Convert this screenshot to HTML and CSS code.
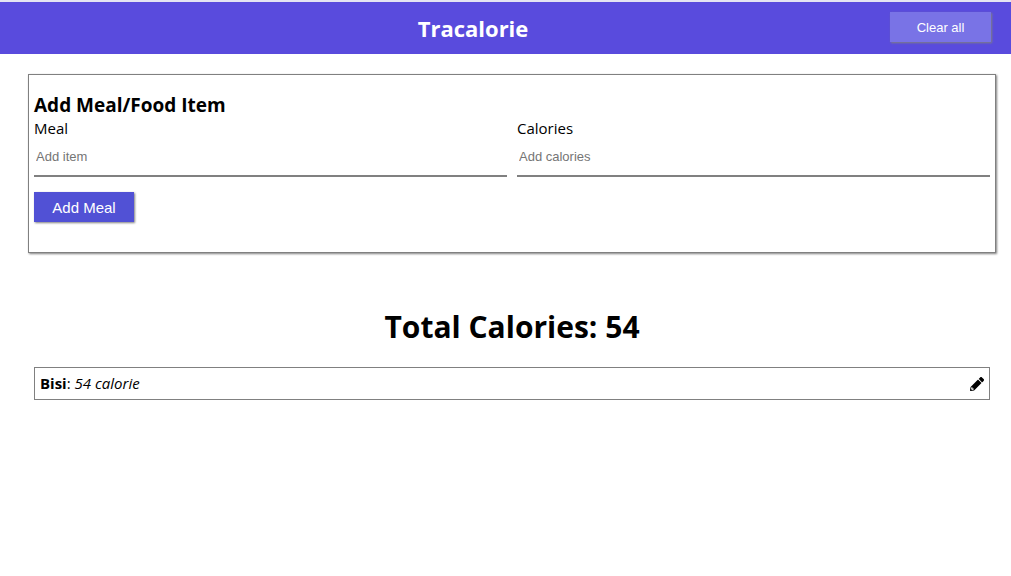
FILE: index.html
```html
<!DOCTYPE html>
<html lang="en">
<head>
  <meta charset="utf-8">
  <meta name="viewport" content="width=device-width, initial-scale=1">
  <title>Tracalorie</title>
  <link rel="stylesheet" href="styles.css">
</head>
<body>
  <header class="navbar">
    <h2 class="brand">Tracalorie</h2>
    <button type="button" class="btn btn-clear">Clear all</button>
  </header>
  <main class="container">
    <form class="card">
      <h3 class="card-title">Add Meal/Food Item</h3>
      <div class="fields">
        <div class="field">
          <label for="item-name">Meal</label>
          <input type="text" id="item-name" placeholder="Add item">
        </div>
        <div class="field">
          <label for="item-calories">Calories</label>
          <input type="text" inputmode="numeric" id="item-calories" placeholder="Add calories">
        </div>
      </div>
      <button type="button" class="btn btn-add">Add Meal</button>
    </form>
    <h1 class="total">Total Calories: <span>54</span></h1>
    <ul class="items">
      <li class="item">
        <p class="item-text"><strong>Bisi</strong>: <em>54 calorie</em></p>
        <a href="#" class="edit" aria-label="Edit Bisi">
          <svg class="edit-icon" viewBox="0 0 512 512" aria-hidden="true"><path d="M498 142l-46 46c-5 5-13 5-17 0L324 77c-5-5-5-12 0-17l46-46c19-19 49-19 68 0l60 60c19 19 19 49 0 68zm-214-42L22 362 0 484c-3 16 12 30 28 28l122-22 262-262c5-5 5-13 0-17L301 100c-4-5-12-5-17 0zM88 424h48v36l-64 12-32-31 12-65h36v48z"/></svg>
        </a>
      </li>
    </ul>
  </main>
</body>
</html>
```
FILE: styles.css
```css
* {
  box-sizing: border-box;
  margin: 0;
  padding: 0;
}

body {
  font-family: "Segoe UI", "Open Sans", "Noto Sans", sans-serif;
  font-size: 15px;
  line-height: 23px;
  color: #000;
  background: #fff;
}

.navbar {
  display: grid;
  grid-template-columns: 1fr auto;
  align-items: start;
  padding: 10px 20px 10px 56px;
  border-top: 2px solid #e4e4f2;
  background: #594bdd;
}

.brand {
  font-size: 22px;
  line-height: 32px;
  font-weight: 700;
  text-align: center;
  color: #fff;
}

.btn {
  border: 0;
  font-family: Arial, "Liberation Sans", sans-serif;
  color: #fff;
  box-shadow: 1px 1px 2px gray;
  cursor: pointer;
}

.btn-clear {
  width: 101px;
  height: 30px;
  font-size: 13px;
  background: #7973e6;
}

.btn-add {
  width: 100px;
  height: 30px;
  font-size: 15px;
  background: #5151d5;
}

.container {
  padding: 20px 15px 20px 28px;
}

.card {
  padding: 18px 5px 30px;
  border: 1px solid gray;
  box-shadow: 1px 1px 2px gray;
}

.card-title {
  font-size: 19px;
  line-height: 24px;
  font-weight: 700;
}

.fields {
  display: grid;
  grid-template-columns: 1fr 1fr;
  gap: 10px;
  margin-bottom: 15px;
}

.field label,
.field input {
  display: block;
}

.field input {
  width: 100%;
  height: 37px;
  padding: 0 2px 3px;
  border: 0;
  border-bottom: 2px solid gray;
  font-family: Arial, "Liberation Sans", sans-serif;
  font-size: 13px;
}

.field input::placeholder {
  color: #757575;
}

.total {
  margin: 53px 0 19px;
  font-size: 30px;
  line-height: 42px;
  font-weight: 700;
  text-align: center;
}

.items {
  padding: 0 6px;
  list-style: none;
}

.item {
  display: flex;
  align-items: center;
  justify-content: space-between;
  padding: 4px 5px;
  border: 1px solid gray;
}

.edit {
  display: flex;
  color: #000;
}

.edit-icon {
  width: 14px;
  height: 14px;
  fill: currentColor;
}
```
